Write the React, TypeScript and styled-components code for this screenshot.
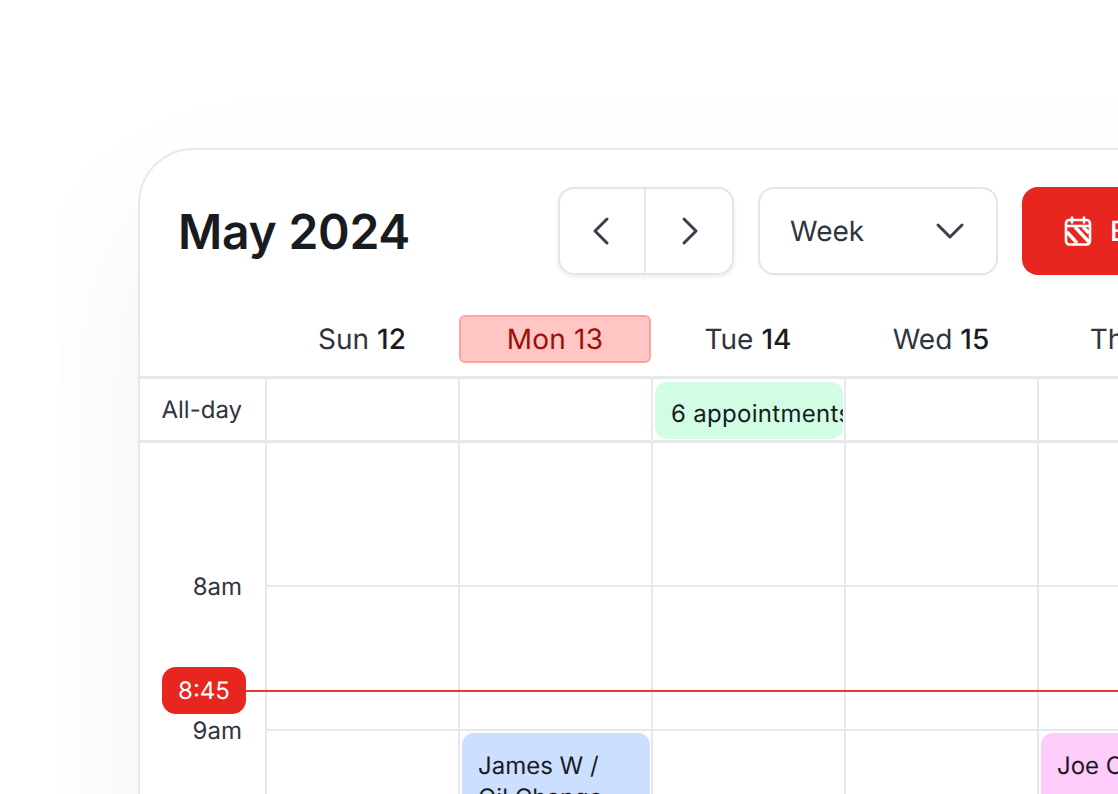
import React from "react";
import styled, { createGlobalStyle } from "styled-components";
import { ChevronDown, ChevronLeft, ChevronRight } from "lucide-react";

const GlobalStyle = createGlobalStyle`
  html, body {
    margin: 0;
    height: 100%;
    background: #fff;
    overflow: hidden;
  }
  body {
    font-family: Inter, "Liberation Sans", sans-serif;
    color: #1d1f24;
    text-rendering: geometricPrecision;
  }
`;

const Stage = styled.div`
  width: 1060px;
  height: 794px;
  margin-left: 58px;
  padding: 148px 0 0 80px;
  box-sizing: border-box;
  overflow: hidden;
`;

const Card = styled.section`
  width: 1500px;
  height: 900px;
  box-sizing: border-box;
  background: #fff;
  border: 2px solid #e8e8ec;
  border-radius: 56px;
  box-shadow: 0 60px 160px rgba(20, 20, 40, 0.05);
`;

const Toolbar = styled.header`
  display: flex;
  align-items: center;
  height: 124px;
  padding: 37px 0 0 38px;
  box-sizing: border-box;
`;

const Title = styled.h1`
  width: 380px;
  margin: 2px 0 0;
  font-size: 48px;
  line-height: 87px;
  font-weight: 600;
  letter-spacing: -0.25px;
  color: #1a1b1f;
`;

const Pager = styled.div`
  display: flex;
  width: 176px;
  height: 88px;
  box-sizing: border-box;
  border: 2px solid #e4e4ea;
  border-radius: 16px;
  box-shadow: 0 2px 4px rgba(20, 20, 40, 0.08);
`;

const PagerButton = styled.div<{ $first?: boolean }>`
  flex: 0 0 86px;
  box-sizing: border-box;
  display: flex;
  align-items: center;
  justify-content: center;
  color: #3a3f4a;
  padding: ${(p) => (p.$first ? "0 2px 0 0" : "0 0 0 2px")};
  border-right: ${(p) => (p.$first ? "2px solid #e4e4ea" : "none")};
`;

const ViewSelect = styled.div`
  display: flex;
  align-items: center;
  justify-content: space-between;
  width: 240px;
  height: 88px;
  margin-left: 24px;
  padding: 0 22px 0 30px;
  box-sizing: border-box;
  border: 2px solid #e4e4ea;
  border-radius: 16px;
  font-size: 28px;
  color: #30343e;
  box-shadow: 0 1px 2px rgba(20, 20, 40, 0.03);
`;

const PrimaryButton = styled.div`
  display: flex;
  align-items: center;
  flex: none;
  gap: 18px;
  width: 320px;
  height: 88px;
  margin-left: 24px;
  padding-left: 42px;
  box-sizing: border-box;
  border-radius: 16px;
  background: #e7261f;
  color: #fff;
  font-size: 28px;
  font-weight: 500;
`;

const DayHeader = styled.div`
  display: grid;
  grid-template-columns: 125px repeat(7, 193px);
  height: 105px;
  padding-top: 40px;
  box-sizing: border-box;
  border-bottom: 3px solid #e8e8ec;
`;

const DayLabel = styled.div<{ $today?: boolean }>`
  display: flex;
  align-items: center;
  justify-content: center;
  gap: 8px;
  height: 48px;
  margin: 1px 0 0 1px;
  box-sizing: border-box;
  font-size: 28px;
  letter-spacing: ${(p) => (p.$today ? "0.2px" : "0")};
  color: ${(p) => (p.$today ? "#9c0f0b" : "#30343e")};
  background: ${(p) => (p.$today ? "#ffc6c4" : "transparent")};
  border: ${(p) => (p.$today ? "2px solid #ffa3a0" : "none")};
  border-radius: 6px;

  b {
    font-weight: ${(p) => (p.$today ? 400 : 500)};
    color: ${(p) => (p.$today ? "inherit" : "#1a1b1f")};
  }
`;

const Grid = styled.div`
  position: relative;
  display: grid;
  grid-template-columns: 125px repeat(7, 193px);
  grid-template-rows: 64px 144px 144px 144px;
`;

const Gutter = styled.div<{ $allDay?: boolean }>`
  position: relative;
  display: flex;
  align-items: center;
  justify-content: flex-end;
  padding-right: 23px;
  font-size: 24px;
  color: #30343e;
  border-bottom: ${(p) => (p.$allDay ? "3px solid #e8e8ec" : "none")};
`;

const HourLabel = styled.span`
  position: absolute;
  right: 23px;
  bottom: 0;
  line-height: 30px;
  transform: translateY(50%);
  font-size: 24px;
  color: #30343e;
`;

const Cell = styled.div<{ $allDay?: boolean }>`
  box-sizing: border-box;
  padding: ${(p) => (p.$allDay ? "3px" : "2px")} 1px 0 2px;
  border-left: 2px solid #e8e8ec;
  border-bottom: ${(p) => (p.$allDay ? "3px solid #e8e8ec" : "2px solid #e8e8ec")};
`;

const Appointment = styled.div<{ $color: string; $allDay?: boolean }>`
  height: ${(p) => (p.$allDay ? "57px" : "160px")};
  padding: ${(p) => (p.$allDay ? "16px 0 0 16px" : "17px 16px 0")};
  box-sizing: border-box;
  overflow: hidden;
  white-space: ${(p) => (p.$allDay ? "nowrap" : "normal")};
  background: ${(p) => p.$color};
  border-radius: 12px;
  font-size: 24px;
  letter-spacing: ${(p) => (p.$allDay ? "0.3px" : "0")};
  line-height: 32px;
  color: #1a1b1f;
`;

const NowPill = styled.div`
  position: absolute;
  left: 22px;
  top: 288px;
  width: 84px;
  height: 47px;
  display: flex;
  align-items: center;
  justify-content: center;
  border-radius: 14px;
  background: #e7261f;
  color: #fff;
  font-size: 24px;
`;

const NowLine = styled.div`
  position: absolute;
  left: 104px;
  right: 0;
  top: 311px;
  height: 2px;
  background: #ea3a33;
`;

const CalendarStripes = () => (
  <svg width="28" height="30" viewBox="0 0 28 30" fill="none" aria-hidden="true">
    <path d="M8 1.5v5M20 1.5v5" stroke="#fff" strokeWidth="2.6" strokeLinecap="round" />
    <rect x="2" y="4" width="24" height="24.5" rx="3.5" stroke="#fff" strokeWidth="2.6" />
    <path d="M2 10h24" stroke="#fff" strokeWidth="2.6" />
    <path d="M3 16l10 11M11 11l14 15M19 11l6 6" stroke="#fff" strokeWidth="3.4" />
  </svg>
);

const days = [
  { name: "Sun", date: 12 },
  { name: "Mon", date: 13, today: true },
  { name: "Tue", date: 14 },
  { name: "Wed", date: 15 },
  { name: "Thu", date: 16 },
  { name: "Fri", date: 17 },
  { name: "Sat", date: 18 },
];

const appointments: Record<string, { title: string; color: string }> = {
  Mon: { title: "James W / Oil Change", color: "#cddffe" },
  Thu: { title: "Joe Cooper", color: "#fdccfa" },
};

const hourRows = ["8am", "9am", ""];

const App = () => {
  return (
    <Stage>
      <GlobalStyle />
      <Card>
        <Toolbar>
          <Title>May 2024</Title>
          <Pager>
            <PagerButton $first>
              <ChevronLeft size={48} strokeWidth={1.5} />
            </PagerButton>
            <PagerButton>
              <ChevronRight size={48} strokeWidth={1.5} />
            </PagerButton>
          </Pager>
          <ViewSelect>
            Week
            <ChevronDown size={48} strokeWidth={1.5} color="#3a3f4a" />
          </ViewSelect>
          <PrimaryButton>
            <CalendarStripes />
            Book
          </PrimaryButton>
        </Toolbar>
        <DayHeader>
          <div />
          {days.map((d) => (
            <DayLabel key={d.name} $today={d.today}>
              {d.name} <b>{d.date}</b>
            </DayLabel>
          ))}
        </DayHeader>
        <Grid>
          <Gutter $allDay>All-day</Gutter>
          {days.map((d) => (
            <Cell key={d.name} $allDay>
              {d.name === "Tue" && (
                <Appointment $allDay $color="#d0fde4">
                  6 appointments
                </Appointment>
              )}
            </Cell>
          ))}
          {hourRows.map((label) => (
            <React.Fragment key={label || "last"}>
              <Gutter>{label && <HourLabel>{label}</HourLabel>}</Gutter>
              {days.map((d) => (
                <Cell key={d.name}>
                  {label === "" && appointments[d.name] && (
                    <Appointment $color={appointments[d.name].color}>
                      {appointments[d.name].title}
                    </Appointment>
                  )}
                </Cell>
              ))}
            </React.Fragment>
          ))}
          <NowLine />
          <NowPill>8:45</NowPill>
        </Grid>
      </Card>
    </Stage>
  );
};

export default App;
